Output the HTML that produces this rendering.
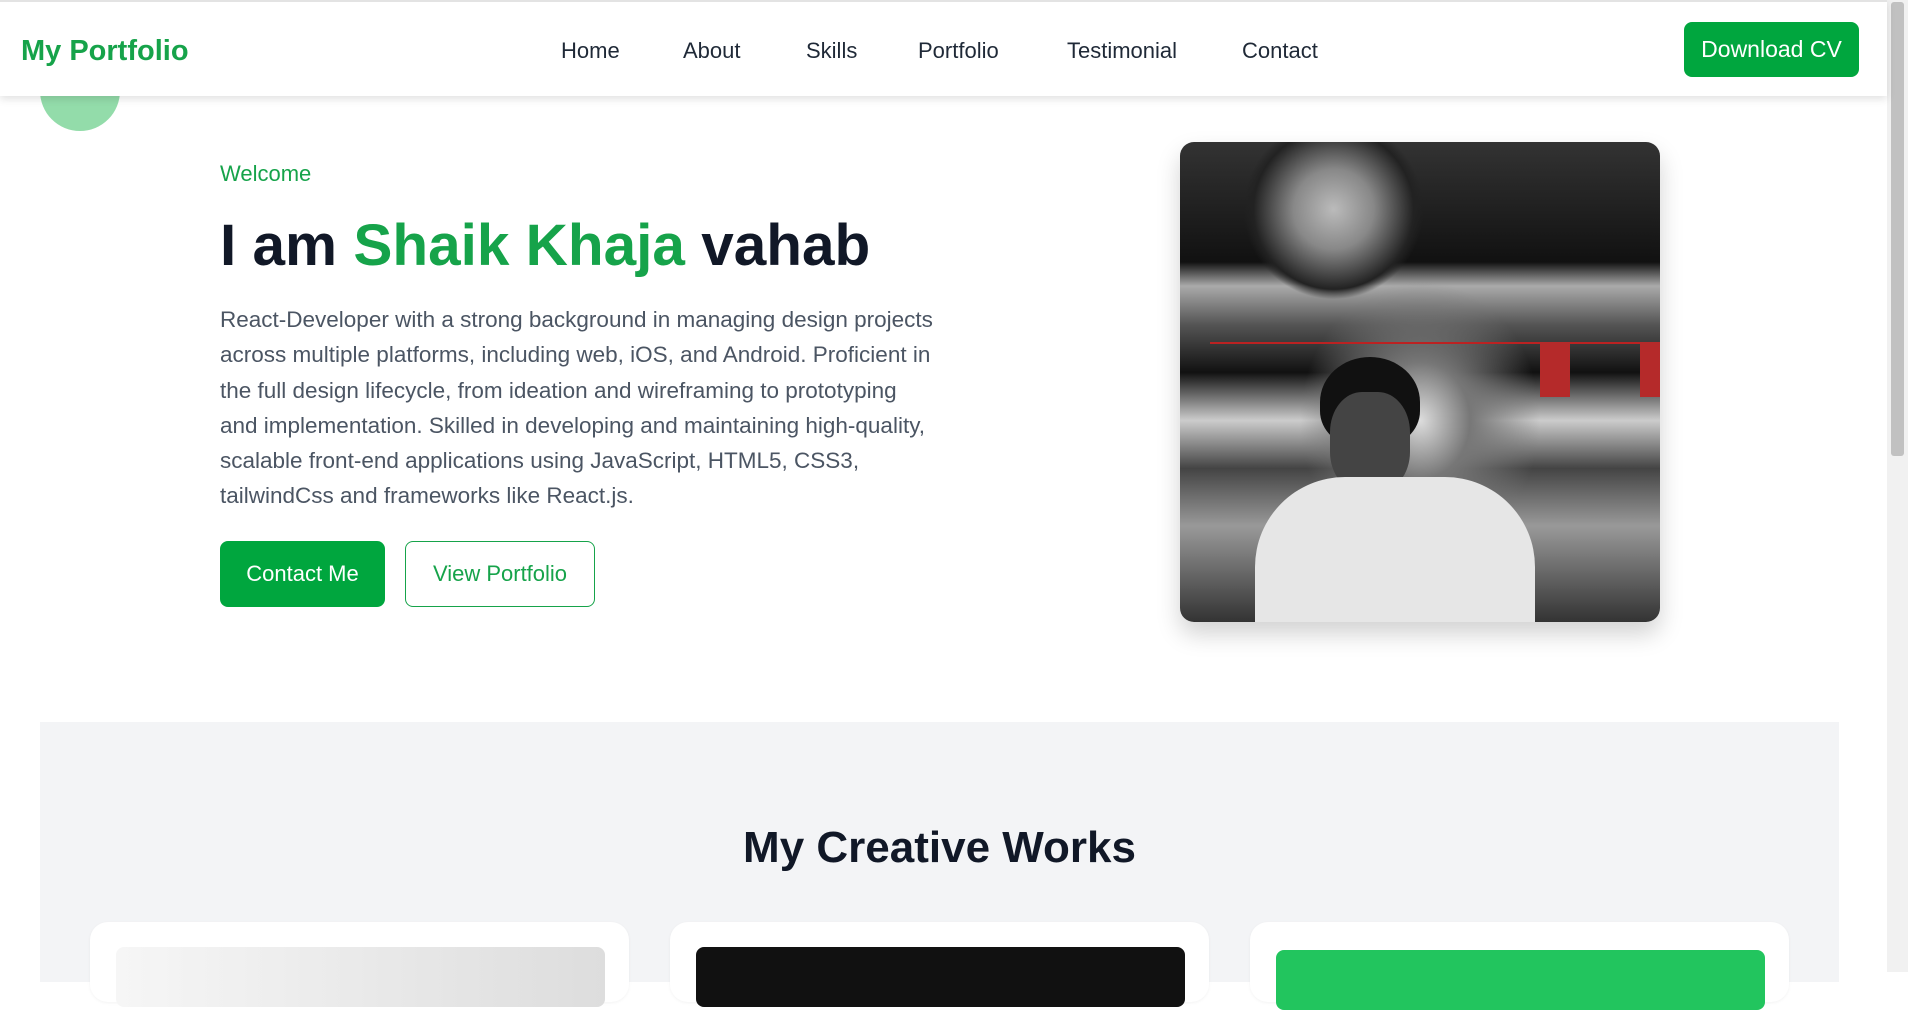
<!DOCTYPE html>
<html><head><meta charset="utf-8"><style>
*{margin:0;padding:0;box-sizing:border-box}
body{width:1908px;height:972px;overflow:hidden;background:#fff;font-family:"Liberation Sans",sans-serif;position:relative}
.nav{position:absolute;left:0;top:0;width:1887px;height:96px;background:#fff;box-shadow:0 3px 8px rgba(0,0,0,.12);z-index:5;border-top:2px solid #e3e3e3}
.logo{position:absolute;left:21px;top:33px;font-size:29px;font-weight:bold;color:#16a34a}
.nav a{position:absolute;top:36px;font-size:22px;color:#1f2937;text-decoration:none}
.dl{position:absolute;left:1684px;top:20px;width:175px;height:55px;background:#00a63e;color:#fff;border-radius:8px;font-size:23px;display:flex;align-items:center;justify-content:center}
.sb{position:absolute;left:1887px;top:0;width:21px;height:972px;background:#f1f1f1}
.sb div{position:absolute;left:4px;top:2px;width:13px;height:454px;background:#c1c1c1;border-radius:3px}
.circle{position:absolute;left:40px;top:51px;width:80px;height:80px;border-radius:50%;background:#93dcaa;z-index:1}
.wel{position:absolute;left:220px;top:161px;font-size:22px;color:#16a34a}
h1{position:absolute;left:220px;top:212px;font-size:58.5px;color:#111827;font-weight:bold;white-space:nowrap}
h1 span{color:#16a34a}
p{position:absolute;left:220px;top:302px;width:800px;white-space:nowrap;font-size:22.5px;line-height:35.3px;color:#4b5563}
.b1{position:absolute;left:220px;top:541px;width:165px;height:66px;background:#00a63e;color:#fff;border-radius:8px;font-size:22px;display:flex;align-items:center;justify-content:center}
.b2{position:absolute;left:405px;top:541px;width:190px;height:66px;border:1.5px solid #16a34a;color:#16a34a;border-radius:8px;font-size:22px;display:flex;align-items:center;justify-content:center}
.photo{position:absolute;left:1180px;top:142px;width:480px;height:480px;border-radius:14px;overflow:hidden;box-shadow:0 12px 24px rgba(0,0,0,.18);
background:
radial-gradient(circle at 32% 14%,#bbb 0,#888 40px,#222 80px,transparent 90px),
radial-gradient(ellipse at 50% 58%,#ddd 0,#777 50px,transparent 120px),
linear-gradient(180deg,#333 0,#111 25%,#aaa 30%,#555 38%,#111 48%,#ccc 58%,#444 68%,#999 80%,#333 100%)}
.gray{position:absolute;left:40px;top:722px;width:1799px;height:260px;background:#f3f4f6}
h2{position:absolute;left:0;width:1879px;text-align:center;top:823px;font-size:44px;color:#111827;font-weight:bold}
.card{position:absolute;top:922px;width:539px;height:80px;background:#fff;border-radius:18px;box-shadow:0 1px 3px rgba(0,0,0,.05)}
.card div{position:absolute;left:26px;top:25px;width:489px;height:60px;border-radius:8px}
</style></head><body>
<div class="nav">
<div class="logo">My Portfolio</div>
<a style="left:561px">Home</a><a style="left:683px">About</a><a style="left:806px">Skills</a><a style="left:918px">Portfolio</a><a style="left:1067px">Testimonial</a><a style="left:1242px">Contact</a>
<div class="dl">Download CV</div>
</div>
<div class="circle"></div>
<div class="sb"><div></div></div>
<div class="wel">Welcome</div>
<h1>I am <span>Shaik Khaja</span> vahab</h1>
<p>React-Developer with a strong background in managing design projects<br>across multiple platforms, including web, iOS, and Android. Proficient in<br>the full design lifecycle, from ideation and wireframing to prototyping<br>and implementation. Skilled in developing and maintaining high-quality,<br>scalable front-end applications using JavaScript, HTML5, CSS3,<br>tailwindCss and frameworks like React.js.</p>
<div class="b1">Contact Me</div>
<div class="b2">View Portfolio</div>
<div class="photo">
<div style="position:absolute;left:30px;top:200px;width:450px;height:50px;border-top:2px solid #b22"></div>
<div style="position:absolute;left:360px;top:200px;width:30px;height:55px;background:#b52a2a"></div>
<div style="position:absolute;left:460px;top:200px;width:20px;height:55px;background:#b52a2a"></div>
<div style="position:absolute;left:140px;top:215px;width:100px;height:90px;border-radius:50% 50% 40% 40%;background:#111"></div>
<div style="position:absolute;left:150px;top:250px;width:80px;height:100px;border-radius:40%;background:#444"></div>
<div style="position:absolute;left:75px;top:335px;width:280px;height:160px;border-radius:90px 90px 0 0;background:#e6e6e6"></div>
</div>
<div class="gray"></div>
<h2>My Creative Works</h2>
<div class="card" style="left:90px"><div style="background:linear-gradient(90deg,#f6f6f6,#ddd)"></div></div>
<div class="card" style="left:670px"><div style="background:#111"></div></div>
<div class="card" style="left:1250px"><div style="background:#22c55e;top:28px"></div></div>
</body></html>
